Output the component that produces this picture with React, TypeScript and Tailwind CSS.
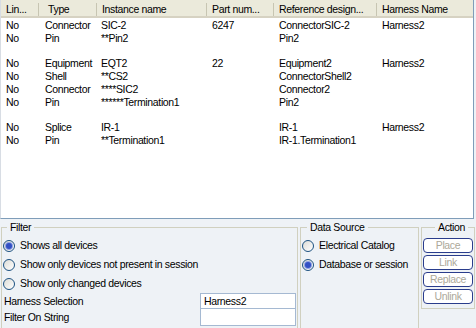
import React from "react"

type Row = [string, string, string, string, string, string] | null

const rows: Row[] = [
    ["No", "Connector", "SIC-2", "6247", "ConnectorSIC-2", "Harness2"],
    ["No", "Pin", "**Pin2", "", "Pin2", ""],
    null,
    ["No", "Equipment", "EQT2", "22", "Equipment2", "Harness2"],
    ["No", "Shell", "**CS2", "", "ConnectorShell2", ""],
    ["No", "Connector", "****SIC2", "", "Connector2", ""],
    ["No", "Pin", "******Termination1", "", "Pin2", ""],
    null,
    ["No", "Splice", "IR-1", "", "IR-1", "Harness2"],
    ["No", "Pin", "**Termination1", "", "IR-1.Termination1", ""],
]

const headers = ["Lin...", "Type", "Instance name", "Part num...", "Reference design...", "Harness Name"]

const cols = "grid grid-cols-[38px_58px_110px_67px_103px_1fr]"

function Radio({ checked, label }: { checked?: boolean; label: string }) {
    return (
        <div className="flex items-center h-[19px] gap-[5px]">
            <span className="w-[12px] h-[12px] rounded-full border border-[#1c5180] bg-gradient-to-br from-[#dcdcd6] to-white flex items-center justify-center shrink-0">
                {checked && <span className="w-[6px] h-[6px] rounded-full bg-[#3250c4] ring-1 ring-[#8ea0e4]" />}
            </span>
            <span className="whitespace-nowrap">{label}</span>
        </div>
    )
}

function ActionButton({ label }: { label: string }) {
    return (
        <div className="h-[15px] rounded-[4px] border border-[#2a3d8c] bg-white flex items-center justify-center text-[#aca899] leading-none">
            {label}
        </div>
    )
}

export default function App() {
    return (
        <div className="w-[476px] h-[328px] bg-[#eef2f6] text-[10.5px] tracking-[-0.35px] text-black overflow-hidden font-['Liberation_Sans',Arial,sans-serif] leading-[13px]">
            {/* DEVICE LIST */}
            <div className="h-[219px] bg-white border-b border-r border-[#7f9db9] border-l border-l-[#d8dde4] w-[474px]">
                <div className={`${cols} h-[18px] bg-[#ebeadb] border-b-2 border-[#d6d2c2]`}>
                    {headers.map((h, i) => (
                        <div key={h} className={`flex items-center pl-[5px] ${i < 5 ? "border-r border-[#c7c5b2] my-[3px]" : ""} ${i === 1 ? "pl-[9px]" : ""}`}>
                            {h}
                        </div>
                    ))}
                </div>
                <div className="pt-[1px]">
                    {rows.map((r, i) =>
                        r ? (
                            <div key={i} className={`${cols} h-[12.75px] items-center`}>
                                {r.map((c, j) => (
                                    <div key={j} className={`whitespace-nowrap ${j === 2 ? "pl-[4px]" : j === 1 ? "pl-[6px]" : "pl-[5px]"}`}>
                                        {c}
                                    </div>
                                ))}
                            </div>
                        ) : (
                            <div key={i} className="h-[12.75px]" />
                        ),
                    )}
                </div>
            </div>

            {/* BOTTOM PANELS */}
            <div className="flex items-start pt-[2px] pl-[1px] gap-[2px]">
                <fieldset className="w-[297px] h-[110px] border border-[#d0d0bf] pl-[1px] pr-[1px]">
                    <legend className="px-[3px] ml-[4px]">Filter</legend>
                    <div className="pt-[2px]">
                        <Radio checked label="Shows all devices" />
                        <Radio label="Show only devices not present in session" />
                        <Radio label="Show only changed devices" />
                    </div>
                    <div className="flex items-center h-[16px] justify-between">
                        <span className="pl-[1px]">Harness Selection</span>
                        <div className="w-[96px] h-[16px] border border-[#a5b9d2] bg-white pl-[3px] flex items-center">Harness2</div>
                    </div>
                    <div className="flex items-center h-[17px] justify-between">
                        <span className="pl-[1px]">Filter On String</span>
                        <div className="w-[96px] h-[17px] border border-[#a5b9d2] border-t-0 bg-white" />
                    </div>
                </fieldset>

                <fieldset className="w-[119px] h-[110px] border border-[#d0d0bf] pl-[1px]">
                    <legend className="px-[3px] ml-[5px]">Data Source</legend>
                    <div className="pt-[2px]">
                        <Radio label="Electrical Catalog" />
                        <Radio checked label="Database or session" />
                    </div>
                </fieldset>

                <fieldset className="w-[54px] h-[88px] border border-[#d0d0bf] px-[1px]">
                    <legend className="px-[3px] ml-[12px]">Action</legend>
                    <div className="flex flex-col gap-[2px] pt-[4px]">
                        <ActionButton label="Place" />
                        <ActionButton label="Link" />
                        <ActionButton label="Replace" />
                        <ActionButton label="Unlink" />
                    </div>
                </fieldset>
            </div>
        </div>
    )
}
